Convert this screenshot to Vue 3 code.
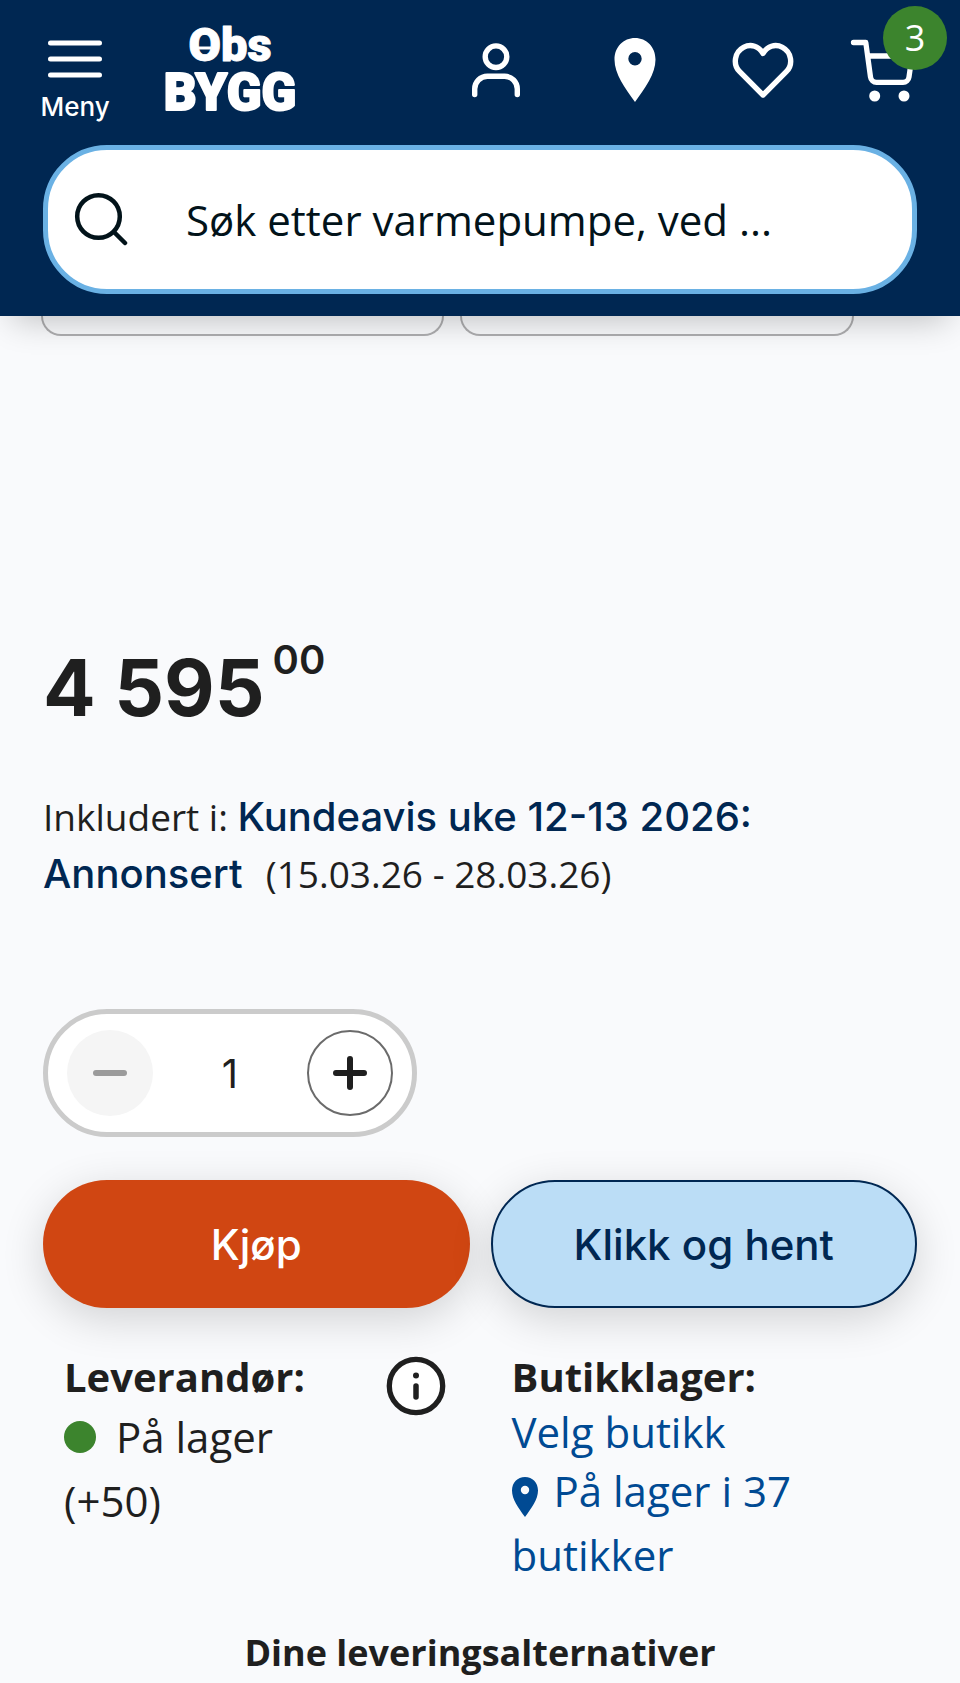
<script setup>
import { ref } from 'vue'

const quantity = ref(1)
const query = ref('')
</script>

<template>
  <div class="page">
    <header class="header">
      <div class="topbar">
        <button class="menu" type="button">
          <svg width="54" height="38" viewBox="0 0 54 38" aria-hidden="true">
            <path d="M2.5 3h49M2.5 19h49M2.5 35h49" stroke="currentColor" stroke-width="5" stroke-linecap="round" />
          </svg>
          <span>Meny</span>
        </button>
        <a class="logo" href="#" aria-label="Obs BYGG">
          <svg width="140" height="120" viewBox="-5 -8 140 120" aria-hidden="true">
            <g fill="#fff" stroke="#fff" stroke-linejoin="round" text-anchor="middle">
              <text class="brand-top" x="65" y="41" stroke-width="1">Obs</text>
              <text class="brand" x="65" y="90" stroke-width="2">BYGG</text>
            </g>
            <path d="M33 28h13" stroke="#fff" stroke-width="3" />
          </svg>
        </a>
        <nav class="tools">
          <a href="#" aria-label="Min side">
            <svg width="64" height="64" viewBox="0 0 64 64" fill="none" stroke="#fff" stroke-width="5.4" stroke-linecap="round">
              <circle cx="32" cy="18.7" r="10.8" />
              <path d="M10.7 56.5V51a12.7 12.7 0 0 1 12.7-12.7h17.2A12.7 12.7 0 0 1 53.3 51v5.5" />
            </svg>
          </a>
          <a href="#" aria-label="Butikker">
            <svg width="64" height="64" viewBox="0 0 64 64" fill="#fff">
              <path fill-rule="evenodd" d="M32 0C20.5 0 11.500 9 11.500 21.500 11.500 36 22 50 32 64c10-14 20.500-28 20.500-42.500C52.500 9 43.500 0 32 0Zm0 14a6.700 6.700 0 1 1 0 13.400A6.700 6.700 0 0 1 32 14Z" />
            </svg>
          </a>
          <a href="#" aria-label="Favoritter">
            <svg width="64" height="64" viewBox="0 0 64 64" fill="none" stroke="#fff" stroke-width="5.4" stroke-linejoin="round">
              <path d="M32 57 8.700 33.700C1.500 26.500 3.500 14 12.500 9.300 20 5.500 28 8.300 32 15.500 36 8.300 44 5.500 51.500 9.300 60.500 14 62.500 26.500 55.300 33.700Z" />
            </svg>
          </a>
          <a class="cart" href="#" aria-label="Handlekurv, 3 varer">
            <svg width="64" height="64" viewBox="0 0 64 64" fill="none" stroke="#fff" stroke-width="5.3" stroke-linecap="round" stroke-linejoin="round">
              <path d="M3.500 4.500h12.300l4.700 34.500a6 6 0 0 0 6 5.300h26.500a6 6 0 0 0 6-5.300l3-21H18" />
              <g fill="#fff" stroke="none">
                <circle cx="24.7" cy="58" r="5.5" />
                <circle cx="54" cy="58" r="5.5" />
              </g>
            </svg>
            <span class="badge">3</span>
          </a>
        </nav>
      </div>
      <form class="search" @submit.prevent>
        <button type="submit" aria-label="Søk">
          <svg width="56" height="56" viewBox="0 0 56 56" fill="none" stroke="#02131a" stroke-width="4.5" stroke-linecap="round">
            <circle cx="26.5" cy="24.5" r="21.3" />
            <path d="m42 40 11 11" />
          </svg>
        </button>
        <input v-model="query" type="text" aria-label="Søk etter produkter" placeholder="Søk etter varmepumpe, ved ..." />
      </form>
    </header>

    <main>
      <div class="options">
        <div class="option"></div>
        <div class="option"></div>
      </div>

      <p class="price">4 595<sup>00</sup></p>

      <p class="notice">
        Inkludert i: <a href="#">Kundeavis uke 12-13 2026: Annonsert</a>&nbsp; (15.03.26 - 28.03.26)
      </p>

      <div class="stepper">
        <button type="button" aria-label="Reduser antall" :disabled="quantity <= 1" @click="quantity--">
          <svg width="34" height="34" viewBox="0 0 34 34" stroke="currentColor" stroke-width="6" stroke-linecap="round">
            <path d="M3 17h28" />
          </svg>
        </button>
        <input v-model.number="quantity" type="text" inputmode="numeric" aria-label="Antall" />
        <button class="plus" type="button" aria-label="Øk antall" @click="quantity++">
          <svg width="34" height="34" viewBox="0 0 34 34" stroke="currentColor" stroke-width="6" stroke-linecap="round">
            <path d="M3 17h28M17 3v28" />
          </svg>
        </button>
      </div>

      <div class="actions">
        <button class="buy" type="button">Kjøp</button>
        <button class="collect" type="button">Klikk og hent</button>
      </div>

      <div class="stock">
        <section class="supplier">
          <div>
            <h2>Leverandør:</h2>
            <p><span class="dot"></span>På lager<br />(+50)</p>
          </div>
          <button class="info" type="button" aria-label="Informasjon">
            <svg width="60" height="60" viewBox="0 0 60 60">
              <circle cx="30" cy="30" r="26.7" fill="#fff" stroke="#1f1f1f" stroke-width="5.3" />
              <circle cx="30" cy="19.5" r="3" fill="#1f1f1f" />
              <path d="M30 30v11" stroke="#1f1f1f" stroke-width="5.5" stroke-linecap="round" />
            </svg>
          </button>
        </section>
        <section class="shops">
          <h2>Butikklager:</h2>
          <a class="choose" href="#">Velg butikk</a>
          <a class="nearby" href="#">
            <svg class="pin" width="26" height="40" viewBox="0 0 26 40" fill="currentColor" aria-hidden="true">
              <path fill-rule="evenodd" d="M13 0C5.500 0 0 5.700 0 13.500 0 22.500 6.500 31 13 40c6.500-9 13-17.500 13-26.500C26 5.700 20.500 0 13 0Zm0 8.800a4.200 4.200 0 1 1 0 8.400 4.200 4.200 0 0 1 0-8.400Z" />
            </svg>På lager i 37 butikker
          </a>
        </section>
      </div>

      <h3 class="delivery">Dine leveringsalternativer</h3>
    </main>
  </div>
</template>

<style>
body {
  margin: 0;
  background: #f9fafc;
}
</style>

<style scoped>
.page {
  overflow: hidden;
  background: #f9fafc;
  color: #1f1f1f;
  font-family: "Open Sans", "Noto Sans", sans-serif;
  font-size: 42px;
}
.page * {
  box-sizing: border-box;
}
button,
input {
  margin: 0;
  padding: 0;
  border: 0;
  background: none;
  color: inherit;
  font: inherit;
}
svg {
  display: block;
}
a {
  color: inherit;
  text-decoration: none;
}
p,
h2,
h3 {
  margin: 0;
}
.header {
  position: relative;
  z-index: 1;
  padding: 20px 43px 22px;
  background: #002752;
  box-shadow: 0 16px 32px -12px rgba(0, 0, 0, 0.24);
}
.topbar {
  display: flex;
  align-items: flex-start;
  height: 125px;
  color: #fff;
}
.menu {
  display: flex;
  flex-direction: column;
  align-items: center;
  gap: 13px;
  width: 64px;
  padding-top: 20px;
  font-family: Inter, sans-serif;
  font-size: 26px;
  font-weight: 500;
  line-height: 32px;
}
.logo {
  margin: -8px 0 0 53px;
}
.brand {
  font-family: Roboto, sans-serif;
  font-size: 51px;
  font-weight: 900;
}
.brand-top {
  font-family: Roboto, sans-serif;
  font-size: 47px;
  font-weight: 900;
}
.tools {
  display: grid;
  grid-template-columns: 139px 128px 119px 67px;
  margin-left: auto;
  padding-top: 18px;
}
.cart {
  position: relative;
}
.badge {
  position: absolute;
  top: -32px;
  right: -30px;
  width: 64px;
  height: 64px;
  border-radius: 50%;
  background: #3c842d;
  font-size: 36px;
  line-height: 64px;
  text-align: center;
}
.search {
  display: flex;
  align-items: center;
  height: 149px;
  padding: 0 24px;
  border: 5px solid #6ab1e4;
  border-radius: 64px;
  background: #fff;
}
.search input {
  flex: 1;
  min-width: 0;
  margin-left: 58px;
  outline: none;
  line-height: 56px;
}
.search input::placeholder {
  color: #02131a;
  opacity: 1;
}
main {
  padding: 0 43px;
}
.options {
  display: flex;
  gap: 16px;
  margin-left: -2px;
}
.option {
  width: 45%;
  height: 20px;
  border: 2px solid #aeaeb0;
  border-top: 0;
  border-radius: 0 0 22px 22px;
}
.option:first-child {
  width: 46%;
}
.price {
  display: flex;
  align-items: flex-start;
  margin-top: 304px;
  font-family: Inter, sans-serif;
  font-size: 78px;
  font-weight: 700;
  line-height: 96px;
}
.price sup {
  margin-left: 8px;
  font-size: 40px;
  font-weight: 600;
  line-height: 40px;
}
.notice {
  margin-top: 52px;
  font-size: 37px;
  line-height: 57px;
}
.notice a {
  margin-right: 4px;
  color: #002752;
  font-family: Inter, sans-serif;
  font-size: 40px;
  font-weight: 500;
}
.stepper {
  display: flex;
  align-items: center;
  width: 374px;
  height: 128px;
  margin-top: 107px;
  padding: 0 19px;
  border: 5px solid #cbcbcb;
  border-radius: 64px;
  background: #fff;
}
.stepper button {
  display: grid;
  flex: none;
  place-items: center;
  width: 86px;
  height: 86px;
  border-radius: 50%;
}
.stepper button:disabled {
  background: #f5f5f5;
  color: #9b9b9b;
}
.stepper .plus {
  border: 2px solid #6b6b6b;
}
.stepper input {
  flex: 1;
  min-width: 0;
  font-family: Inter, sans-serif;
  font-size: 40px;
  text-align: center;
}
.actions {
  display: grid;
  grid-template-columns: 1fr 1fr;
  gap: 21px;
  margin-top: 43px;
}
.actions button {
  height: 128px;
  border-radius: 64px;
  box-shadow: 0 11px 43px rgba(0, 0, 0, 0.16);
  font-family: Inter, sans-serif;
  font-size: 42px;
  font-weight: 500;
}
.buy {
  background: #d04612;
  color: #fff;
}
.actions .collect {
  border: 2px solid #002752;
  background: #bbddf6;
  color: #002752;
}
.stock {
  display: grid;
  grid-template-columns: 1fr 1fr;
  gap: 21px;
  margin-top: 41px;
  line-height: 64px;
}
.stock h2 {
  font-size: 40px;
  font-weight: 700;
  line-height: 56px;
}
.supplier {
  display: flex;
  align-items: flex-start;
  justify-content: space-between;
  padding: 0 24px 0 21px;
}
.dot {
  display: inline-block;
  width: 32px;
  height: 32px;
  margin-right: 20px;
  border-radius: 50%;
  background: #3c842d;
}
.info {
  margin-top: 7px;
}
.shops {
  padding: 0 80px 0 21px;
  color: #004a93;
}
.shops h2 {
  color: #1f1f1f;
}
.choose {
  display: block;
  line-height: 54px;
}
.nearby {
  display: block;
}
.pin {
  display: inline-block;
  margin-right: 16px;
  vertical-align: -10px;
}
.delivery {
  margin-top: 38px;
  font-size: 36px;
  font-weight: 700;
  line-height: 56px;
  text-align: center;
}
</style>
